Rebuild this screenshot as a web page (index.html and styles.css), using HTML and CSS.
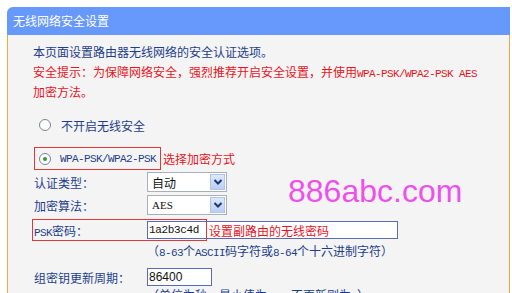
FILE: index.html
```html
<!DOCTYPE html>
<html lang="zh-CN">
<head>
<meta charset="utf-8">
<title>无线网络安全设置</title>
<link rel="stylesheet" href="styles.css">
</head>
<body>
<div class="panel">
  <div class="hd">无线网络安全设置</div>
  <div class="bd">
    <div class="desc">
      <p class="blue l1">本页面设置路由器无线网络的安全认证选项。</p>
      <p class="red">安全提示：为保障网络安全，强烈推荐开启安全设置，并使用<span class="m">WPA-PSK/WPA2-PSK AES</span><br>加密方法。</p>
    </div>
    <div class="opt1"><span class="radio"></span><span class="blue">不开启无线安全</span></div>
    <div class="opt2row">
      <span class="boxed"><span class="radio on"></span><span class="m blue">WPA-PSK/WPA2-PSK</span></span>
      <span class="red note">选择加密方式</span>
    </div>
    <div class="row r1">
      <span class="lbl">认证类型：</span>
      <span class="sel"><span class="val">自动</span><span class="btn"><svg width="10" height="8" viewBox="0 0 10 8"><path d="M1.5 2 L5 5.5 L8.5 2" fill="none" stroke="#1d3570" stroke-width="2"/></svg></span></span>
    </div>
    <div class="row r2">
      <span class="lbl">加密算法：</span>
      <span class="sel"><span class="val serif">AES</span><span class="btn"><svg width="10" height="8" viewBox="0 0 10 8"><path d="M1.5 2 L5 5.5 L8.5 2" fill="none" stroke="#1d3570" stroke-width="2"/></svg></span></span>
    </div>
    <div class="row r3">
      <span class="lbl"><span class="m">PSK</span>密码：</span>
      <span class="inp wide"><span class="m pw">1a2b3c4d</span><span class="red note2">设置副路由的无线密码</span></span>
      <span class="mark"></span>
    </div>
    <div class="row r4">
      <span class="lbl"></span>
      <span class="blue">（<span class="m">8-63</span>个<span class="m">ASCII</span>码字符或<span class="m">8-64</span>个十六进制字符）</span>
    </div>
    <div class="row r5">
      <span class="lbl">组密钥更新周期：</span>
      <span class="inp short"><span class="num">86400</span></span>
    </div>
    <div class="row r6">
      <span class="lbl"></span>
      <span class="blue">（单位为秒，最小值为<span class="m">30</span>，不更新则为<span class="m">0</span>）</span>
    </div>
  </div>
</div>
<div class="wm">886abc.com</div>
</body>
</html>
```

FILE: styles.css
```css
html, body {
  margin: 0;
  padding: 0;
  background: #ffffff;
  overflow: hidden;
}
body {
  width: 512px;
  height: 293px;
  position: relative;
  font-family: "Noto Sans CJK SC", "Liberation Sans", sans-serif;
  font-size: 12px;
  color: #1d3e8c;
}
p { margin: 0; }
.panel {
  margin: 7px 0 0 7px;
  width: 503px;
}
.hd {
  height: 28px;
  line-height: 28px;
  background: #6699fb;
  color: #ffffff;
  padding-left: 6px;
  border-top-left-radius: 6px;
  font-size: 12px;
}
.bd {
  background: #f4f4f4;
  border-left: 1px solid #f0a840;
  border-right: 1px solid #f0a840;
  height: 260px;
  padding-left: 26px;
  box-sizing: border-box;
}
.blue { color: #1d3e8c; }
.red { color: #e8141e; }
.m {
  font-family: "Liberation Mono", monospace;
  font-size: 11px;
  letter-spacing: -0.6px;
}
.desc {
  padding-top: 8px;
  margin-left: -1px;
  line-height: 17px;
}
.desc .l1 { margin-bottom: 3px; }
.radio {
  display: inline-block;
  width: 10px;
  height: 10px;
  border: 1px solid #7a8494;
  border-radius: 50%;
  background: #ffffff;
  position: relative;
  flex: none;
}
.radio.on::after {
  content: "";
  position: absolute;
  left: 3px;
  top: 3px;
  width: 4px;
  height: 4px;
  border-radius: 50%;
  background: #2f9a3a;
}
.opt1 {
  margin-top: 15px;
  height: 20px;
  display: flex;
  align-items: center;
  margin-left: 5px;
  gap: 10px;
}
.opt2row {
  margin-top: 12px;
  height: 23px;
  display: flex;
  align-items: center;
}
.boxed {
  height: 23px;
  box-sizing: border-box;
  border: 1px solid #e03838;
  display: flex;
  align-items: center;
  padding: 0 3px 0 4px;
  gap: 9px;
  width: 127px;
}
.note { margin-left: 2px; }
.row {
  display: grid;
  grid-template-columns: 113px auto;
  align-items: center;
  position: relative;
}
.r1 { margin-top: 2px; height: 20px; }
.r2 { margin-top: 3px; height: 20px; }
.r3 { margin-top: 4px; height: 22px; }
.r4 { margin-top: 2px; height: 16px; line-height: 16px; }
.r5 { margin-top: 8px; height: 20px; }
.r6 { margin-top: 0; height: 16px; line-height: 16px; }
.sel {
  width: 80px;
  height: 20px;
  box-sizing: border-box;
  border: 1px solid #a8b0bc;
  background: #ffffff;
  display: flex;
  align-items: center;
  justify-content: space-between;
}
.val {
  padding-left: 4px;
  color: #111111;
}
.val.serif {
  font-family: "Liberation Serif", serif;
  font-size: 11px;
}
.btn {
  width: 15px;
  height: 16px;
  margin-right: 1px;
  box-sizing: border-box;
  border: 1px solid #b4c4e4;
  background: linear-gradient(#dce8fc, #b9cff6);
  display: flex;
  align-items: center;
  justify-content: center;
}
.inp {
  height: 18px;
  box-sizing: border-box;
  border: 1px solid #5a6cb4;
  background: #ffffff;
  display: flex;
  align-items: center;
}
.inp.wide { width: 251px; }
.inp.short { width: 65px; }
.pw {
  color: #111111;
  padding-left: 1px;
  letter-spacing: -0.35px;
}
.note2 { margin-left: 10px; }
.num {
  font-family: "Liberation Sans", sans-serif;
  font-size: 12px;
  color: #111111;
  padding-left: 1px;
}
.mark {
  position: absolute;
  left: -2px;
  top: 0;
  width: 175px;
  height: 22px;
  box-sizing: border-box;
  border: 1px solid #e03838;
  pointer-events: none;
}
.wm {
  position: absolute;
  left: 288px;
  top: 175px;
  font-family: "Liberation Sans", sans-serif;
  font-size: 32px;
  line-height: 32px;
  color: #ee50ee;
}
```
